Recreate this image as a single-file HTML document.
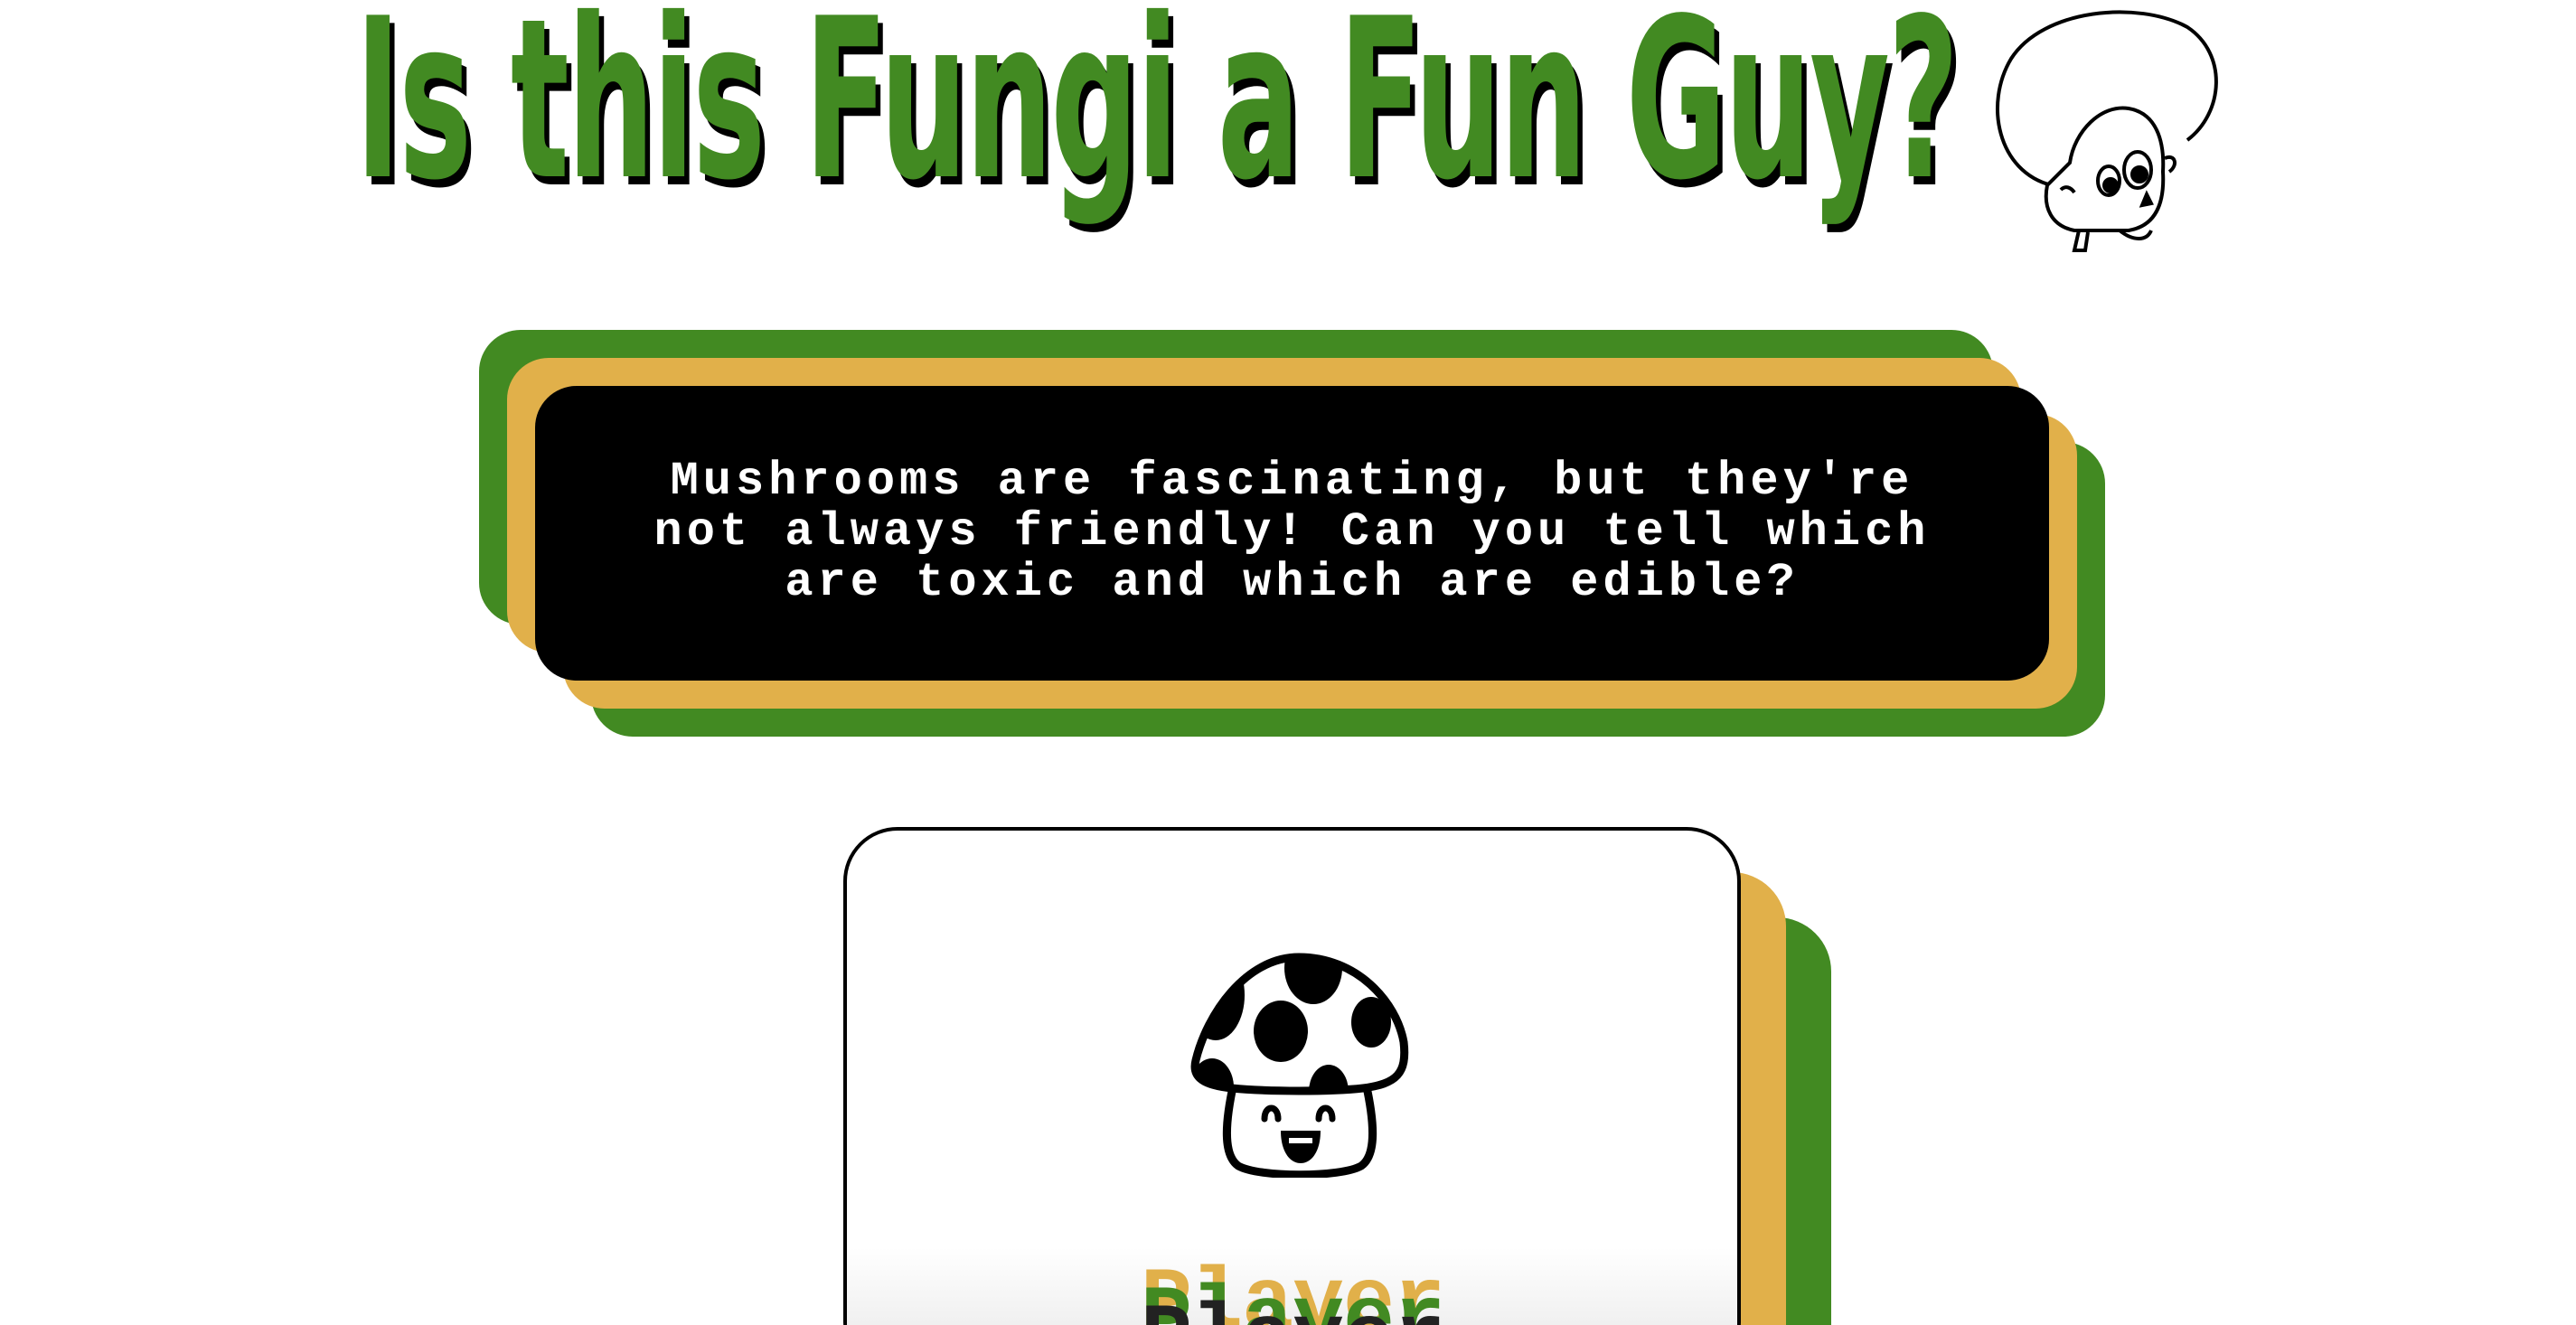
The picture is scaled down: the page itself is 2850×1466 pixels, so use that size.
<!DOCTYPE html>
<html><head><meta charset="utf-8"><style>
html,body{margin:0;padding:0;width:2850px;height:1466px;overflow:hidden;background:#fff;position:relative}
.title{position:absolute;left:393px;top:-12px;font-family:"DejaVu Sans","Liberation Sans",sans-serif;font-weight:bold;font-size:245px;line-height:245px;color:#428a22;white-space:nowrap;transform:scaleX(0.554);transform-origin:left top;text-shadow:10px 9px 0 #000;letter-spacing:-4px}
.box{position:absolute;left:592px;top:427px;width:1675px;height:326px;background:#000;border-radius:46px;
box-shadow:-31px -31px 0 #e1b04a,-62px -62px 0 #428a22,31px 31px 0 #e1b04a,62px 62px 0 #428a22;}
.txt{position:absolute;left:592px;top:505px;width:1675px;text-align:center;color:#fff;font-family:"Liberation Mono",monospace;font-size:52px;line-height:56px;letter-spacing:5px;font-weight:bold}
.card{position:absolute;left:933px;top:915px;width:985px;height:600px;background:#fff;border:4px solid #000;border-radius:60px;box-shadow:50px 50px 0 #e1b04a,100px 100px 0 #428a22}
.grad{position:absolute;left:937px;top:1380px;width:985px;height:86px;background:linear-gradient(#fff,#f0f0f0)}
.pl{position:absolute;left:1262px;font-family:"Liberation Mono",monospace;font-weight:bold;font-size:95px;line-height:95px;letter-spacing:-1px}
</style></head><body>
<div class="title">Is this Fungi a Fun Guy?</div>
<svg style="position:absolute;left:2195px;top:5px" width="290" height="285" viewBox="0 0 290 285" fill="none" stroke="#000" stroke-width="4">
<path d="M75 200 C15 185 0 110 30 60 C65 5 170 -5 225 25 C270 55 265 120 225 150"/>
<path d="M95 175 C100 140 130 110 160 115 C190 120 200 150 198 185 C200 220 190 245 160 250 L100 250 C75 245 65 225 70 200 Z" fill="#fff"/>
<ellipse cx="170" cy="183" rx="15" ry="20"/><circle cx="172" cy="188" r="8" fill="#000"/>
<ellipse cx="138" cy="195" rx="12" ry="16"/><circle cx="140" cy="200" r="7" fill="#000"/>
<path d="M85 205 C90 200 96 202 100 208"/><path d="M180 210 L185 220 L175 222 Z" fill="#000"/>
<path d="M200 170 C212 165 215 178 205 185"/>
<path d="M105 250 L100 272 L112 272 L115 252"/><path d="M150 250 C165 262 180 262 185 250"/>
</svg>
<div class="box"></div>
<div class="txt">Mushrooms are fascinating, but they're<br>not always friendly! Can you tell which<br>are toxic and which are edible?</div>
<div class="card"></div>
<div class="grad"></div>
<svg style="position:absolute;left:1313px;top:1053px" width="250" height="250" viewBox="0 0 250 250">
<defs><clipPath id="cp"><path d="M124 6 C65 6 22 70 10 120 C5 140 20 148 50 151 C90 155 160 155 195 151 C232 146 244 135 240 100 C232 55 188 6 124 6Z"/></clipPath></defs>
<path d="M52 145 C42 190 40 225 57 237 C80 250 170 250 193 237 C210 225 208 190 198 145 Z" fill="#fff" stroke="#000" stroke-width="9" stroke-linejoin="round"/>
<path d="M124 6 C65 6 22 70 10 120 C5 140 20 148 50 151 C90 155 160 155 195 151 C232 146 244 135 240 100 C232 55 188 6 124 6Z" fill="#fff" stroke="#000" stroke-width="9"/>
<g clip-path="url(#cp)" fill="#000">
<ellipse cx="140" cy="18" rx="32" ry="40"/>
<ellipse cx="32" cy="48" rx="32" ry="50"/>
<ellipse cx="104" cy="88" rx="30" ry="34"/>
<ellipse cx="204" cy="78" rx="22" ry="28"/>
<ellipse cx="28" cy="150" rx="24" ry="32"/>
<ellipse cx="157" cy="155" rx="22" ry="30"/>
</g>
<path d="M86 185 C86 169 101 169 101 185 M146 185 C146 169 161 169 161 185" stroke="#000" stroke-width="7" fill="none" stroke-linecap="round"/>
<path d="M104 198 L148 198 C148 221 138 234 126 234 C114 234 104 221 104 198 Z" fill="#000"/>
<rect x="113" y="206" width="26" height="6" fill="#fff"/>
</svg>
<div class="pl" style="top:1395px;color:#e1b04a">Player</div>
<div class="pl" style="top:1415px;color:#428a22">Player</div>
<div class="pl" style="top:1435px;color:#222">Player</div>
</body></html>
